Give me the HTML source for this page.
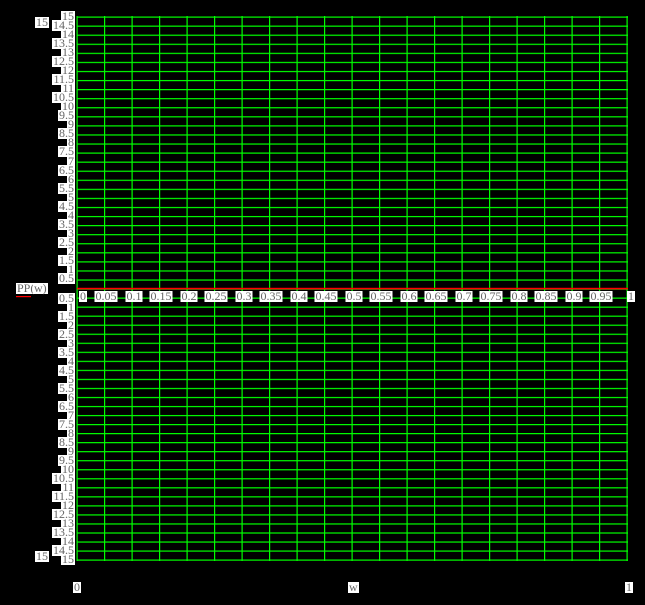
<!DOCTYPE html>
<html><head><meta charset="utf-8"><style>
body{margin:0;width:645px;height:605px;background:#000;position:relative;overflow:hidden;font-family:"Liberation Serif",serif;}
.l{position:absolute;background:#fff;color:#666;font-size:12px;line-height:11px;padding:0 1px;white-space:nowrap}
.y{right:570px}
.x{top:291px;transform:translateX(-50%)}
</style></head><body>
<svg width="645" height="605" style="position:absolute;left:0;top:0">
<defs>
<pattern id="pu" x="0" y="16.5" width="645" height="9.0667" patternUnits="userSpaceOnUse"><rect x="0" y="0" width="645" height="1.2" fill="#00ff00"/></pattern>
<pattern id="pl" x="0" y="288.5" width="645" height="9.0333" patternUnits="userSpaceOnUse"><rect x="0" y="0" width="645" height="1.2" fill="#00ff00"/></pattern>
<pattern id="pv" x="76.5" y="0" width="27.5" height="605" patternUnits="userSpaceOnUse"><rect x="0" y="0" width="1.2" height="605" fill="#00ff00"/></pattern>
</defs>
<rect x="77" y="16" width="551" height="272" fill="url(#pu)"/>
<rect x="77" y="289" width="551" height="272" fill="url(#pl)"/>
<rect x="76" y="16" width="553" height="545" fill="url(#pv)"/>
<rect x="77" y="287.8" width="551" height="1.6" fill="#ff0000"/>
<rect x="16" y="296" width="15" height="1.2" fill="#ff0000"/>
</svg>
<div class="l" style="left:35px;top:17px">15</div>
<div class="l" style="left:35px;top:551px">15</div>
<div class="l" style="left:16px;top:283px">PP(</div><div class="l" style="left:33px;top:283px">w)</div>
<div class="l" style="left:73px;top:582px">0</div>
<div class="l" style="left:348px;top:582px">w</div>
<div class="l" style="left:625px;top:582px">1</div>

<div class="l y" style="top:11px">15</div>
<div class="l y" style="top:20px">14.5</div>
<div class="l y" style="top:29px">14</div>
<div class="l y" style="top:38px">13.5</div>
<div class="l y" style="top:47px">13</div>
<div class="l y" style="top:56px">12.5</div>
<div class="l y" style="top:65px">12</div>
<div class="l y" style="top:74px">11.5</div>
<div class="l y" style="top:83px">11</div>
<div class="l y" style="top:92px">10.5</div>
<div class="l y" style="top:101px">10</div>
<div class="l y" style="top:110px">9.5</div>
<div class="l y" style="top:119px">9</div>
<div class="l y" style="top:128px">8.5</div>
<div class="l y" style="top:137px">8</div>
<div class="l y" style="top:146px">7.5</div>
<div class="l y" style="top:156px">7</div>
<div class="l y" style="top:165px">6.5</div>
<div class="l y" style="top:174px">6</div>
<div class="l y" style="top:183px">5.5</div>
<div class="l y" style="top:192px">5</div>
<div class="l y" style="top:201px">4.5</div>
<div class="l y" style="top:210px">4</div>
<div class="l y" style="top:219px">3.5</div>
<div class="l y" style="top:228px">3</div>
<div class="l y" style="top:237px">2.5</div>
<div class="l y" style="top:246px">2</div>
<div class="l y" style="top:255px">1.5</div>
<div class="l y" style="top:264px">1</div>
<div class="l y" style="top:273px">0.5</div>

<div class="l y" style="top:293px">0.5</div>
<div class="l y" style="top:302px">1</div>
<div class="l y" style="top:311px">1.5</div>
<div class="l y" style="top:320px">2</div>
<div class="l y" style="top:329px">2.5</div>
<div class="l y" style="top:338px">3</div>
<div class="l y" style="top:347px">3.5</div>
<div class="l y" style="top:356px">4</div>
<div class="l y" style="top:365px">4.5</div>
<div class="l y" style="top:374px">5</div>
<div class="l y" style="top:383px">5.5</div>
<div class="l y" style="top:392px">6</div>
<div class="l y" style="top:401px">6.5</div>
<div class="l y" style="top:410px">7</div>
<div class="l y" style="top:419px">7.5</div>
<div class="l y" style="top:428px">8</div>
<div class="l y" style="top:437px">8.5</div>
<div class="l y" style="top:446px">9</div>
<div class="l y" style="top:455px">9.5</div>
<div class="l y" style="top:464px">10</div>
<div class="l y" style="top:473px">10.5</div>
<div class="l y" style="top:482px">11</div>
<div class="l y" style="top:491px">11.5</div>
<div class="l y" style="top:500px">12</div>
<div class="l y" style="top:509px">12.5</div>
<div class="l y" style="top:518px">13</div>
<div class="l y" style="top:527px">13.5</div>
<div class="l y" style="top:536px">14</div>
<div class="l y" style="top:545px">14.5</div>
<div class="l y" style="top:554px">15</div>

<div class="l" style="left:79px;top:291px">0</div>
<div class="l x" style="left:106px">0.05</div>
<div class="l x" style="left:134px">0.1</div>
<div class="l x" style="left:161px">0.15</div>
<div class="l x" style="left:189px">0.2</div>
<div class="l x" style="left:216px">0.25</div>
<div class="l x" style="left:244px">0.3</div>
<div class="l x" style="left:271px">0.35</div>
<div class="l x" style="left:299px">0.4</div>
<div class="l x" style="left:326px">0.45</div>
<div class="l x" style="left:354px">0.5</div>
<div class="l x" style="left:381px">0.55</div>
<div class="l x" style="left:409px">0.6</div>
<div class="l x" style="left:436px">0.65</div>
<div class="l x" style="left:464px">0.7</div>
<div class="l x" style="left:491px">0.75</div>
<div class="l x" style="left:519px">0.8</div>
<div class="l x" style="left:546px">0.85</div>
<div class="l x" style="left:574px">0.9</div>
<div class="l x" style="left:601px">0.95</div>
<div class="l" style="left:627px;top:291px">1</div>
</body></html>
